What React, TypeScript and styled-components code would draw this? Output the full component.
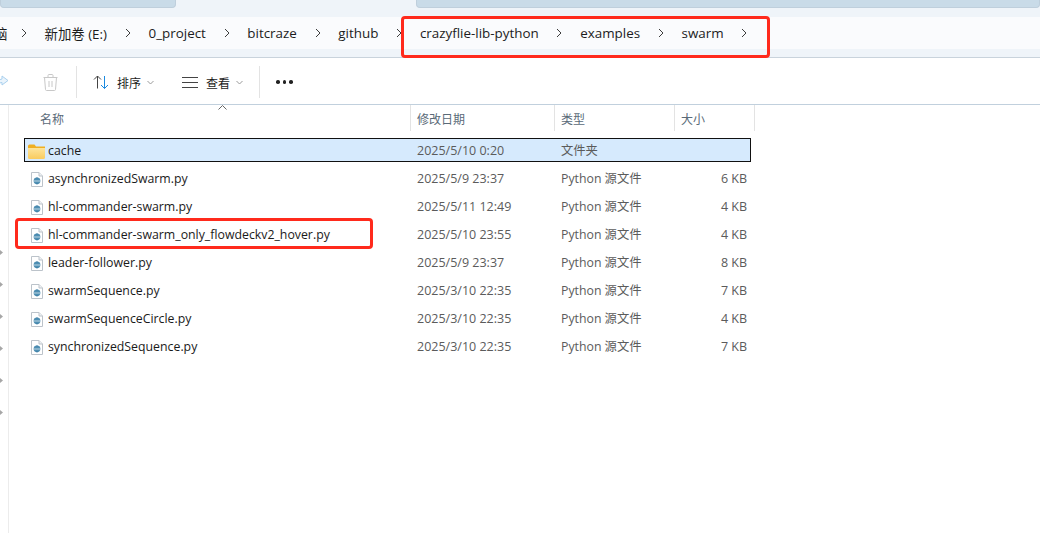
import React from 'react'
import styled, { createGlobalStyle } from 'styled-components'

const GlobalStyle = createGlobalStyle`
  html, body {
    margin: 0;
    padding: 0;
    background: #fff;
  }
  body {
    font-family: "Open Sans", "Noto Sans CJK SC", sans-serif;
    overflow: hidden;
  }
`

const crumbs = ['新加卷 (E:)', '0_project', 'bitcraze', 'github', 'crazyflie-lib-python', 'examples', 'swarm']

const files = [
  { name: 'asynchronizedSwarm.py', date: '2025/5/9 23:37', size: '6 KB' },
  { name: 'hl-commander-swarm.py', date: '2025/5/11 12:49', size: '4 KB' },
  { name: 'hl-commander-swarm_only_flowdeckv2_hover.py', date: '2025/5/10 23:55', size: '4 KB' },
  { name: 'leader-follower.py', date: '2025/5/9 23:37', size: '8 KB' },
  { name: 'swarmSequence.py', date: '2025/3/10 22:35', size: '7 KB' },
  { name: 'swarmSequenceCircle.py', date: '2025/3/10 22:35', size: '4 KB' },
  { name: 'synchronizedSequence.py', date: '2025/3/10 22:35', size: '7 KB' },
]

const Chevron = () => (
  <CrumbChevron width="6" height="10" viewBox="0 0 6 10">
    <path d="M1 1l4 4-4 4" fill="none" stroke="#3c3c3c" strokeWidth="1" />
  </CrumbChevron>
)

const DropChevron = () => (
  <DropIcon width="7" height="5" viewBox="0 0 7 5">
    <path d="M.5 1l3 3 3-3" fill="none" stroke="#9a9a9a" strokeWidth="1" />
  </DropIcon>
)

const PyIcon = () => (
  <svg width="12" height="15" viewBox="0 0 12 15">
    <path d="M.5.5h7.500l3.500 3.500v10.500H.5z" fill="#fff" stroke="#bcc3ca" />
    <path d="M8 .5v3.500h3.500" fill="#eef1f4" stroke="#bcc3ca" />
    <circle cx="6" cy="8.800" r="3.400" fill="#4f8fb3" />
    <path d="M2.600 9h6.800" stroke="#dbe8f0" strokeWidth=".8" />
    <path d="M6 5.400v1.200M6 11v1.200" stroke="#3f7fa6" strokeWidth="1.400" />
  </svg>
)

const FolderIcon = () => (
  <svg width="17" height="15" viewBox="0 0 17 15">
    <defs>
      <linearGradient id="folderFront" x1="0" y1="0" x2="0" y2="1">
        <stop offset="0" stopColor="#fde49a" />
        <stop offset="1" stopColor="#f9cb5e" />
      </linearGradient>
    </defs>
    <path d="M0 2q0-1.500 1.500-1.500h5L8 2.500h9V4H0z" fill="#efaf22" />
    <path d="M0 4h17v9.500q0 1.500-1.500 1.500h-14Q0 15 0 13.500z" fill="url(#folderFront)" />
  </svg>
)

const App: React.FC = () => {
  return (
    <Page>
      <GlobalStyle />
      <TabStrip>
        <Tab $width="176px" />
        <Tab $width="624px" $left="240px" />
      </TabStrip>
      <AddressBand>
        <AddressBar>
          <ClippedCrumb>脑</ClippedCrumb>
          <Chevron />
          {crumbs.map((c) => (
            <React.Fragment key={c}>
              <Crumb>{c}</Crumb>
              <Chevron />
            </React.Fragment>
          ))}
        </AddressBar>
      </AddressBand>
      <Toolbar>
        <ShareSlot>
          <svg width="16" height="16" viewBox="0 0 16 16">
            <path d="M8 2l6 4.500-6 4.500V8.500Q3 8.500 1 12q.5-6 7-7z" fill="#eaf4fc" stroke="#a9d0ee" />
          </svg>
        </ShareSlot>
        <TrashSlot>
          <svg width="15" height="17" viewBox="0 0 15 17" fill="none" stroke="#c8c8c8">
            <path d="M.5 3.500h14M5 3.500V1.500q0-1 1-1h3q1 0 1 1v2M1.500 3.500l1 12q.1 1 1 1h8q.9 0 1-1l1-12M6 7v6M9 7v6" />
          </svg>
        </TrashSlot>
        <ToolDivider />
        <ToolButton $width="89px">
          <svg width="16" height="14" viewBox="0 0 16 14" fill="none">
            <path d="M4.500 13.500V1M1 4.500L4.500 1 8 4.500" stroke="#444" />
            <path d="M11.500 1v12.500M8 10l3.500 3.500L15 10" stroke="#1a8ae0" />
          </svg>
          <ToolLabel>排序</ToolLabel>
          <DropChevron />
        </ToolButton>
        <ToolButton $width="93px">
          <svg width="16" height="11" viewBox="0 0 16 11" fill="none" stroke="#444">
            <path d="M0 .5h16M0 5.500h16M0 10.500h16" />
          </svg>
          <ToolLabel>查看</ToolLabel>
          <DropChevron />
        </ToolButton>
        <ToolDivider />
        <MoreDots>
          <Dot />
          <Dot />
          <Dot />
        </MoreDots>
      </Toolbar>
      <Body>
        <Sidebar>
          {Array.from({ length: 6 }).map((_, i) => (
            <SideArrow key={i} />
          ))}
        </Sidebar>
        <Main>
          <SortCaret width="9" height="5" viewBox="0 0 9 5">
            <path d="M.5 4.500l4-4 4 4" fill="none" stroke="#666" />
          </SortCaret>
          <Header>
            <HeadCell $width="387px">名称</HeadCell>
            <HeadCell $width="144px">修改日期</HeadCell>
            <HeadCell $width="120px">类型</HeadCell>
            <HeadCell $width="80px">大小</HeadCell>
          </Header>
          <List>
            <Row $selected>
              <NameCell>
                <IconSlot $left="3px">
                  <FolderIcon />
                </IconSlot>
                <FileName>cache</FileName>
              </NameCell>
              <DateCell>2025/5/10 0:20</DateCell>
              <TypeCell>文件夹</TypeCell>
              <SizeCell />
            </Row>
            {files.map((f) => (
              <Row key={f.name}>
                <NameCell>
                  <IconSlot $left="6px">
                    <PyIcon />
                  </IconSlot>
                  <FileName>{f.name}</FileName>
                </NameCell>
                <DateCell>{f.date}</DateCell>
                <TypeCell>Python 源文件</TypeCell>
                <SizeCell>{f.size}</SizeCell>
              </Row>
            ))}
          </List>
        </Main>
      </Body>
      <Callout $left="401px" $top="16px" $width="369px" $height="42px" />
      <Callout $left="15px" $top="218px" $width="358px" $height="31px" />
    </Page>
  )
}

export default App

const Page = styled.div`
  position: relative;
  width: 1040px;
  height: 533px;
  display: flex;
  flex-direction: column;
  overflow: hidden;
  background: #fff;
`

const TabStrip = styled.div`
  height: 17px;
  display: flex;
  background: #eff4f9;
`

const Tab = styled.div<{ $width: string; $left?: string }>`
  width: ${({ $width }) => $width};
  margin-left: ${({ $left }) => $left || '0'};
  height: 8px;
  background: #c9dbe8;
  border: 1px solid #bfcfdc;
  border-top: none;
  border-radius: 0 0 4px 4px;
  box-sizing: border-box;
`

const AddressBand = styled.div`
  height: 41px;
  box-sizing: border-box;
  background: #eff4f9;
  border-bottom: 1px solid #c9d3dc;
`

const AddressBar = styled.div`
  height: 32px;
  display: flex;
  align-items: center;
  background: #fafbfd;
  font-size: 13.4px;
  color: #1c1c1c;
  overflow: hidden;
`

const ClippedCrumb = styled.span`
  margin-left: -6px;
  width: 9px;
  flex: none;
  font-family: "Noto Sans CJK SC", sans-serif;
`

const Crumb = styled.span`
  flex: none;
  white-space: nowrap;
`

const CrumbChevron = styled.svg`
  flex: none;
  margin: 0 17.750px;
`

const Toolbar = styled.div`
  height: 47px;
  box-sizing: border-box;
  padding-top: 2px;
  display: flex;
  align-items: center;
  border-bottom: 1px solid #c1d0dd;
  font-size: 12px;
  color: #1c1c1c;
`

const ShareSlot = styled.div`
  width: 49px;
  display: flex;
  margin-left: -6px;
`

const TrashSlot = styled.div`
  width: 33px;
  display: flex;
`

const ToolDivider = styled.div`
  width: 1px;
  height: 32px;
  background: #e3e3e3;
`

const ToolButton = styled.div<{ $width: string }>`
  width: ${({ $width }) => $width};
  padding-left: 16px;
  box-sizing: border-box;
  display: flex;
  align-items: center;
`

const ToolLabel = styled.span`
  margin: 0 6px 0 8px;
  white-space: nowrap;
  font-family: "Noto Sans CJK SC", sans-serif;
`

const DropIcon = styled.svg`
  flex: none;
`

const MoreDots = styled.div`
  display: flex;
  gap: 3px;
  margin-left: 16px;
`

const Dot = styled.span`
  width: 3.500px;
  height: 3.500px;
  border-radius: 50%;
  background: #222;
`

const Body = styled.div`
  flex: 1;
  display: flex;
  min-height: 0;
`

const Sidebar = styled.div`
  width: 9px;
  flex: none;
  box-sizing: border-box;
  border-right: 1px solid #ececec;
  padding-top: 145px;
  display: flex;
  flex-direction: column;
  gap: 27px;
`

const SideArrow = styled.span`
  width: 3px;
  height: 5px;
  background: #a6a6a6;
  clip-path: polygon(0 0, 100% 50%, 0 100%);
`

const Main = styled.div`
  position: relative;
  flex: 1;
  min-width: 0;
  padding-left: 15px;
`

const SortCaret = styled.svg`
  position: absolute;
  left: 209px;
  top: 0;
`

const Header = styled.div`
  height: 26px;
  display: flex;
  margin-bottom: 7px;
`

const HeadCell = styled.div<{ $width: string }>`
  width: ${({ $width }) => $width};
  box-sizing: border-box;
  padding-left: 6px;
  border-right: 1px solid #e3e3e3;
  display: flex;
  align-items: center;
  font-family: "Noto Sans CJK SC", sans-serif;
  font-size: 12px;
  color: #5a6a78;
  &:first-child {
    padding-left: 16px;
  }
`

const List = styled.div`
  display: flex;
  flex-direction: column;
  gap: 4px;
  width: 727px;
`

const Row = styled.div<{ $selected?: boolean }>`
  height: 24px;
  box-sizing: border-box;
  padding-top: 2px;
  display: flex;
  align-items: center;
  font-size: 12.500px;
  line-height: 16px;
  border: 1px solid ${({ $selected }) => ($selected ? '#111' : 'transparent')};
  background: ${({ $selected }) => ($selected ? '#d6eafd' : 'transparent')};
`

const NameCell = styled.div`
  width: 392px;
  flex: none;
  display: flex;
  align-items: center;
  color: #1a1a1a;
`

const IconSlot = styled.span<{ $left: string }>`
  width: 23px;
  flex: none;
  box-sizing: border-box;
  padding-left: ${({ $left }) => $left};
  display: flex;
`

const FileName = styled.span`
  white-space: nowrap;
  font-size: 12.320px;
`

const DateCell = styled.div`
  width: 144px;
  flex: none;
  color: #5b5b5b;
`

const TypeCell = styled.div`
  width: 120px;
  flex: none;
  color: #5b5b5b;
  font-size: 12.300px;
`

const SizeCell = styled.div`
  width: 66px;
  flex: none;
  text-align: right;
  color: #5b5b5b;
`

const Callout = styled.div<{ $left: string; $top: string; $width: string; $height: string }>`
  position: absolute;
  left: ${({ $left }) => $left};
  top: ${({ $top }) => $top};
  width: ${({ $width }) => $width};
  height: ${({ $height }) => $height};
  box-sizing: border-box;
  border: 3px solid #ff2a1c;
  border-radius: 4px;
`
